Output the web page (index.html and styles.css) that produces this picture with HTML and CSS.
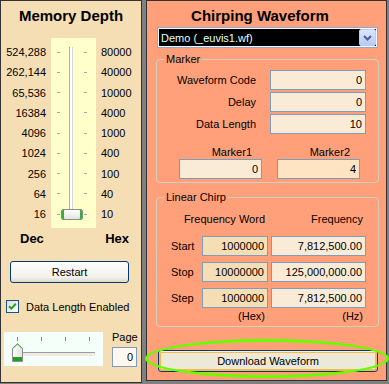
FILE: index.html
```html
<!DOCTYPE html>
<html lang="en">
<head>
    <meta charset="UTF-8">
    <title>Chirping Waveform</title>
    <link rel="stylesheet" href="styles.css">
</head>
<body>
    <div class="window">
        <section class="panel depth-panel">
            <h1 class="panel-title">Memory Depth</h1>

            <div class="depth">
                <span class="dec">524,288</span><span class="ticks"><i></i><i></i></span><span class="hex">80000</span>
                <span class="dec">262,144</span><span class="ticks"><i></i><i></i></span><span class="hex">40000</span>
                <span class="dec">65,536</span><span class="ticks"><i></i><i></i></span><span class="hex">10000</span>
                <span class="dec">16384</span><span class="ticks"><i></i><i></i></span><span class="hex">4000</span>
                <span class="dec">4096</span><span class="ticks"><i></i><i></i></span><span class="hex">1000</span>
                <span class="dec">1024</span><span class="ticks"><i></i><i></i></span><span class="hex">400</span>
                <span class="dec">256</span><span class="ticks"><i></i><i></i></span><span class="hex">100</span>
                <span class="dec">64</span><span class="ticks"><i></i><i></i></span><span class="hex">40</span>
                <span class="dec">16</span><span class="ticks"><i></i><i></i></span><span class="hex">10</span>
                <div class="depth-track"></div>
                <div class="depth-thumb"></div>
            </div>

            <div class="depth-units">
                <span>Dec</span>
                <span>Hex</span>
            </div>

            <button class="btn restart">Restart</button>

            <label class="check-row">
                <svg class="checkbox" width="13" height="13" viewBox="0 0 13 13">
                    <defs>
                        <linearGradient id="boxFill" x1="0" y1="0" x2="1" y2="1">
                            <stop offset="0" stop-color="#DCDCD7"/>
                            <stop offset="1" stop-color="#FFFFFF"/>
                        </linearGradient>
                    </defs>
                    <rect x="0.5" y="0.5" width="12" height="12" fill="url(#boxFill)" stroke="#1C5180"/>
                    <path d="M3 6.2 L5.3 8.6 L9.8 3.8" fill="none" stroke="#21A121" stroke-width="2"/>
                </svg>
                <span>Data Length Enabled</span>
            </label>

            <div class="page-row">
                <div class="hslider">
                    <div class="hslider-ticks"><i></i><i></i><i></i><i></i></div>
                    <div class="hslider-track"></div>
                    <svg class="hslider-thumb" width="11" height="19" viewBox="0 0 11 19">
                        <defs>
                            <linearGradient id="thumbFill" x1="0" y1="0" x2="1" y2="0">
                                <stop offset="0" stop-color="#FFFFFF"/>
                                <stop offset="1" stop-color="#E2E2DD"/>
                            </linearGradient>
                        </defs>
                        <path d="M0.5 5.5 L5.5 0.5 L10.5 5.5 L10.5 18.5 L0.5 18.5 Z" fill="url(#thumbFill)" stroke="#8D8D8D"/>
                        <path d="M1 5.5 L5.5 1 L10 5.5" fill="none" stroke="#3CC33C"/>
                        <rect x="1" y="14" width="9" height="4" fill="#21A121"/>
                    </svg>
                </div>
                <div class="page-group">
                    <span>Page</span>
                    <input class="field page-field" value="0" readonly>
                </div>
            </div>
        </section>

        <section class="panel chirp-panel">
            <h1 class="panel-title">Chirping Waveform</h1>

            <div class="combo">
                <span>Demo (_euvis1.wf)</span>
                <span class="combo-btn">
                    <svg width="15" height="15" viewBox="0 0 15 15">
                        <path d="M4 6 L7.5 9.5 L11 6" fill="none" stroke="#4D6185" stroke-width="2"/>
                    </svg>
                </span>
            </div>

            <fieldset class="group marker-group">
                <legend>Marker</legend>
                <div class="form-row">
                    <span>Waveform Code</span>
                    <input class="field" value="0" readonly>
                </div>
                <div class="form-row">
                    <span>Delay</span>
                    <input class="field" value="0" readonly>
                </div>
                <div class="form-row">
                    <span>Data Length</span>
                    <input class="field" value="10" readonly>
                </div>
                <div class="marker-grid">
                    <span class="marker-label">Marker1</span>
                    <span class="marker-label">Marker2</span>
                    <input class="field" value="0" readonly>
                    <input class="field bisque" value="4" readonly>
                </div>
            </fieldset>

            <fieldset class="group chirp-group">
                <legend>Linear Chirp</legend>
                <div class="chirp-row chirp-head">
                    <span class="word-head">Frequency Word</span>
                    <span>Frequency</span>
                </div>
                <div class="chirp-row first">
                    <span class="row-label">Start</span>
                    <input class="field word" value="1000000" readonly>
                    <input class="field" value="7,812,500.00" readonly>
                </div>
                <div class="chirp-row">
                    <span class="row-label">Stop</span>
                    <input class="field word" value="10000000" readonly>
                    <input class="field" value="125,000,000.00" readonly>
                </div>
                <div class="chirp-row">
                    <span class="row-label">Step</span>
                    <input class="field word" value="1000000" readonly>
                    <input class="field" value="7,812,500.00" readonly>
                </div>
                <div class="chirp-row chirp-units">
                    <span class="word-head">(Hex)</span>
                    <span>(Hz)</span>
                </div>
            </fieldset>

            <button class="btn download">Download Waveform</button>
            <div class="highlight"></div>
        </section>
    </div>
</body>
</html>
```

FILE: styles.css
```css
* {
    box-sizing: border-box;
}

body {
    margin: 0;
    width: 389px;
    height: 384px;
    overflow: hidden;
    background: #808080;
    font-family: "Liberation Sans", Arial, sans-serif;
    font-size: 11px;
    color: #000;
}

.window {
    display: flex;
    align-items: flex-start;
    gap: 4px;
}

.panel {
    border: 1px solid #333;
}

.depth-panel {
    width: 142px;
    height: 383px;
    background: #F5DEB3;
}

.chirp-panel {
    position: relative;
    width: 241px;
    height: 381px;
    background: #FFA07A;
}

.panel-title {
    margin: 6px 0 0;
    font-size: 15px;
    line-height: 18px;
    font-weight: bold;
    text-align: center;
}

.chirp-panel .panel-title {
    padding-right: 13px;
}

/* vertical memory depth slider */
.depth {
    position: relative;
    display: grid;
    grid-template-columns: 50px 45px 1fr;
    grid-auto-rows: 20.25px;
    align-items: center;
    margin-top: 13px;
    padding: 4px 0;
    background: linear-gradient(to right, transparent 50px, #FFFFCC 50px, #FFFFCC 95px, transparent 95px);
}

.dec {
    text-align: right;
    padding-right: 5px;
}

.hex {
    padding-left: 5px;
}

.ticks {
    display: flex;
    justify-content: space-between;
    padding: 0 9px 0 6px;
}

.ticks i {
    width: 3px;
    height: 1px;
    background: #A8A8A8;
}

.depth-track {
    position: absolute;
    left: 68px;
    top: 9px;
    width: 4px;
    height: 172px;
    background: #fff;
    border-left: 1px solid #B0B0B0;
    border-right: 1px solid #D6D6D6;
}

.depth-thumb {
    position: absolute;
    left: 60px;
    top: 171px;
    width: 22px;
    height: 11px;
    border: 1px solid #8D8D8D;
    border-radius: 2px;
    background: linear-gradient(#FFFFFF, #E4E4DF);
    box-shadow: inset 2px 0 #2DB52D, inset -2px 0 #2DB52D;
}

.depth-units {
    display: flex;
    justify-content: space-between;
    margin-top: 3px;
    padding: 0 12px 0 19px;
    font-size: 13px;
    line-height: 15px;
    font-weight: bold;
}

.btn {
    display: block;
    height: 22px;
    padding: 0;
    border: 1px solid #003C74;
    border-radius: 3px;
    background: linear-gradient(#FEFEFD, #F2F1EB 75%, #DEDACD);
    font-family: inherit;
    font-size: 11px;
    color: #000;
}

.restart {
    width: 119px;
    margin: 15px 0 0 9px;
}

.check-row {
    display: flex;
    align-items: center;
    gap: 7px;
    height: 13px;
    margin: 17px 0 0 5px;
}

.checkbox {
    display: block;
}

.page-row {
    display: flex;
    align-items: flex-start;
    gap: 9px;
    margin: 19px 0 0 3px;
}

/* horizontal page slider */
.hslider {
    position: relative;
    width: 99px;
    height: 34px;
    background: #F5FFFA;
}

.hslider-ticks {
    position: absolute;
    left: 13px;
    top: 5px;
    width: 73px;
    display: flex;
    justify-content: space-between;
}

.hslider-ticks i {
    width: 1px;
    height: 4px;
    background: #8A8A8A;
}

.hslider-track {
    position: absolute;
    left: 9px;
    top: 20px;
    width: 82px;
    height: 4px;
    border-top: 1px solid #9D9D9D;
    background: #EEEBE4;
}

.hslider-thumb {
    position: absolute;
    left: 8px;
    top: 11px;
}

.page-group {
    display: flex;
    flex-direction: column;
    gap: 3px;
    width: 25px;
    margin-top: -1px;
    line-height: 13px;
    text-align: center;
}

.field {
    display: block;
    width: 100%;
    height: 20px;
    margin: 0;
    padding: 0 3px;
    border: 1px solid #7F9DB9;
    background: #FAEBD7;
    font-family: inherit;
    font-size: 11px;
    color: #000;
    text-align: right;
    outline: none;
}

.page-field {
    background: #FFF8EE;
}

.field.bisque {
    background: #FFE4C4;
}

.field.word {
    background: #F5DEB3;
}

/* combo box */
.combo {
    display: flex;
    align-items: center;
    width: 221px;
    height: 21px;
    margin: 2px 0 0 10px;
    padding-left: 3px;
    border: 1px solid #8FA9CC;
    box-shadow: inset 0 0 0 1px #F4F8FF;
    background: #000;
    color: #E0FFFF;
}

.combo-btn {
    display: flex;
    align-items: center;
    justify-content: center;
    width: 17px;
    height: 17px;
    margin: 0 1px 0 auto;
    border: 1px solid #B9CCF3;
    border-radius: 2px;
    background: linear-gradient(#DCE6FE, #B6CAF7);
}

/* group boxes */
.group {
    width: 223px;
    margin: 0 0 0 9px;
    padding: 0 12px 0 0;
    border: 1px solid #D0D0BF;
    border-radius: 4px;
}

.group legend {
    margin-left: 7px;
    padding: 0 2px;
    line-height: 12px;
}

.marker-group {
    margin-top: 5px;
    padding-top: 5px;
    padding-bottom: 3px;
}

.form-row {
    display: flex;
    justify-content: flex-end;
    align-items: center;
    gap: 14px;
}

.form-row + .form-row {
    margin-top: 2px;
}

.form-row .field {
    width: 96px;
}

.marker-grid {
    display: grid;
    grid-template-columns: 83px 83px;
    column-gap: 15px;
    row-gap: 1px;
    margin: 12px 0 0 22px;
    line-height: 12px;
}

.marker-label {
    text-align: right;
    padding-right: 10px;
}

.chirp-group {
    margin-top: 8px;
    padding-top: 10px;
    padding-bottom: 4px;
}

.chirp-row {
    display: grid;
    grid-template-columns: 42px 66px 95px;
    column-gap: 3px;
    align-items: center;
    margin-top: 6px;
}

.chirp-head {
    margin-top: 0;
    line-height: 12px;
}

.chirp-row.first {
    margin-top: 11px;
}

.chirp-head span,
.chirp-units span {
    text-align: right;
    padding-right: 3px;
    white-space: nowrap;
}

.chirp-row .word-head {
    grid-column: 1 / span 2;
}

.chirp-units {
    margin-top: 2px;
    line-height: 12px;
}

.row-label {
    padding-left: 14px;
}

.download {
    width: 220px;
    height: 22px;
    margin: 23px 0 0 11px;
    background: #ECE9D8;
    box-shadow: inset 0 1px #FFF0CF, inset 0 0 0 2px #F8B84A;
}

.highlight {
    position: absolute;
    left: -2px;
    top: 338px;
    width: 244px;
    height: 39px;
    border: 3px solid #66FF00;
    border-radius: 50%;
}
```
